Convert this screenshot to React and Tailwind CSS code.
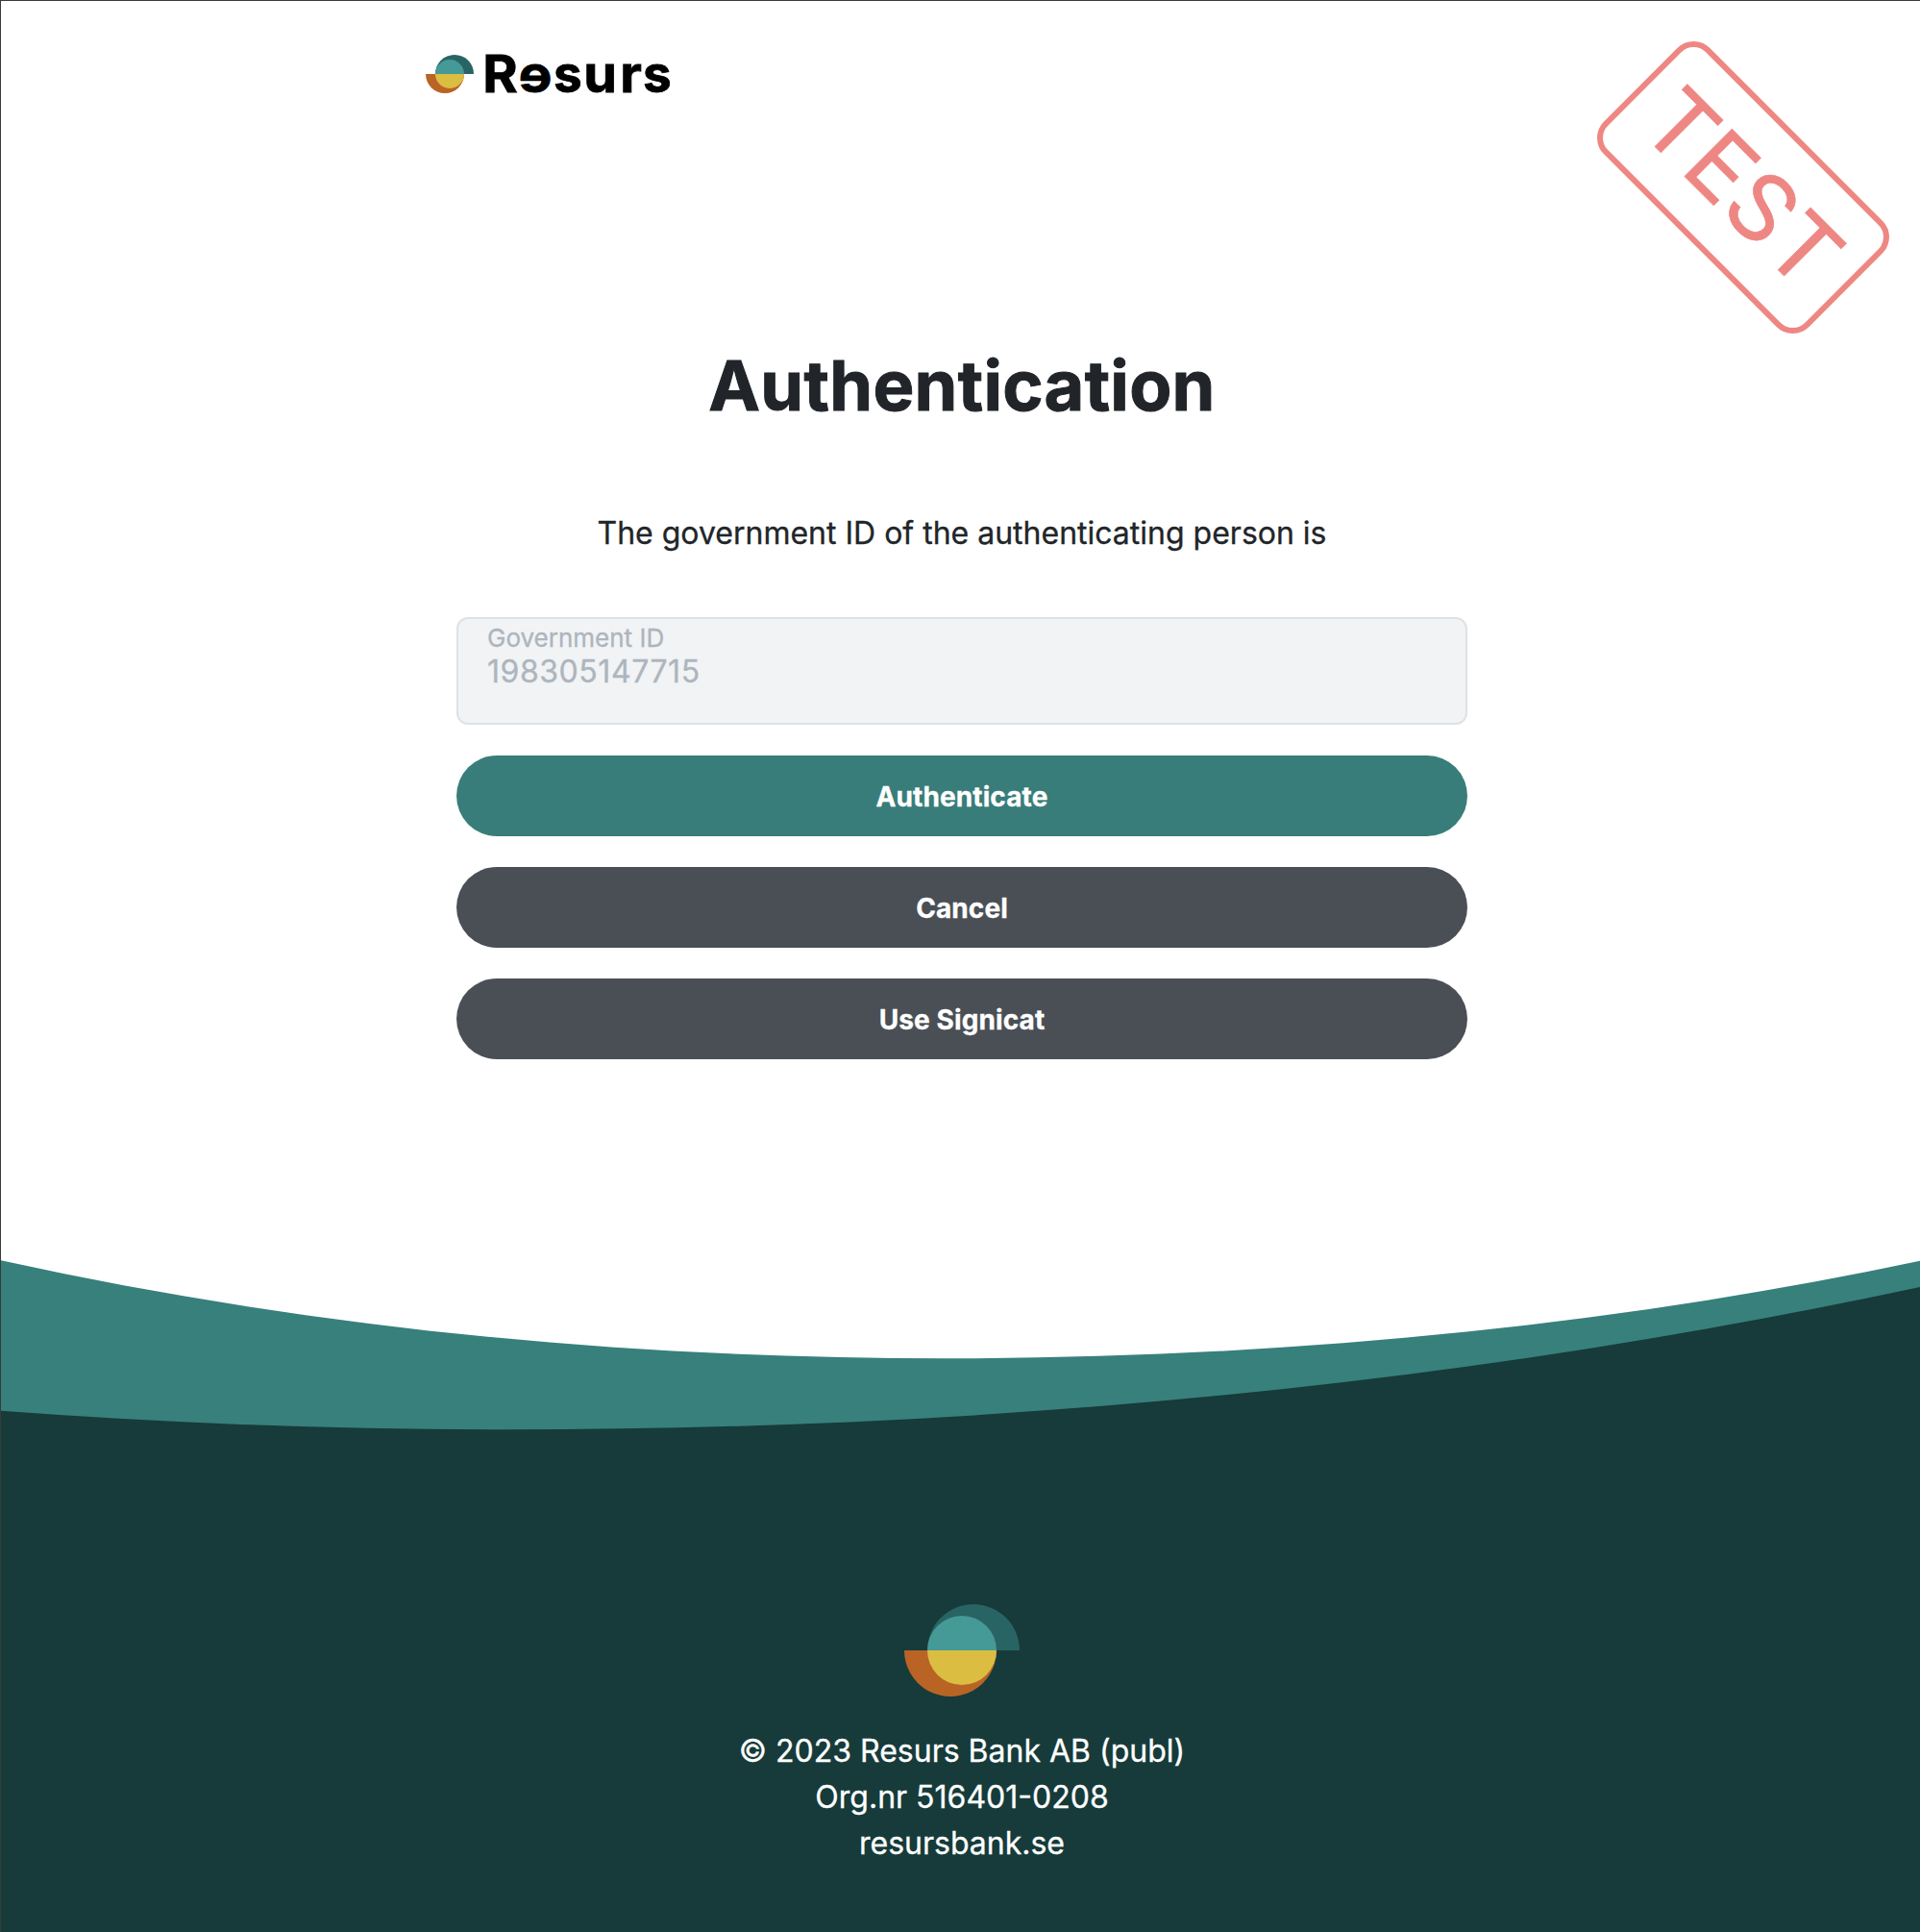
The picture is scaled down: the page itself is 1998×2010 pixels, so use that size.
function Mark({ className }) {
  return (
    <svg viewBox="0 0 120 96" className={className} aria-hidden="true">
      <path d="M24 48a48 48 0 0 1 96 0z" fill="#296464" />
      <path d="M0 48a48 48 0 0 0 96 0z" fill="#b96424" />
      <path d="M24 48a36 36 0 0 1 72 0z" fill="#459a97" />
      <path d="M24 48a36 36 0 0 0 72 0z" fill="#dbbd42" />
    </svg>
  );
}

function Wordmark() {
  return (
    <span className="ml-[10px] flex text-center text-[53px] leading-[40px] font-bold text-black [-webkit-text-stroke:0.8px]">
      <span className="w-[35px] scale-x-105">R</span>
      <span className="w-[38px] -scale-x-110">e</span>
      <span className="w-[29px]">s</span>
      <span className="w-[39px] scale-x-105">u</span>
      <span className="w-[25px] scale-x-105">r</span>
      <span className="w-[26px]">s</span>
    </span>
  );
}

const buttons = [
  { label: "Authenticate", color: "bg-[#387d79]" },
  { label: "Cancel", color: "bg-[#4a4f56]" },
  { label: "Use Signicat", color: "bg-[#4a4f56]" },
];

export default function App() {
  return (
    <div className="relative flex h-[2010px] w-[1998px] flex-col overflow-hidden border-t border-l border-[#3a3a3c] bg-white font-['Inter',sans-serif] text-[#212529] [-webkit-text-stroke:0.3px]">
      <header className="flex h-[110px] items-start pt-[56px] pl-[442px]">
        <Mark className="h-10 w-[50px]" />
        <Wordmark />
      </header>

      <div className="absolute top-[116px] left-[1662px] flex h-[156px] w-[302px] rotate-45 items-center justify-center rounded-[24px] border-[6px] border-[#ee8783] text-[96px] leading-none text-[#ee8783] [-webkit-text-stroke:0.6px]">
        TEST
      </div>

      <main className="mx-[474px] flex h-[1200px] w-[1052px] flex-col items-stretch">
        <h1 className="mt-[246px] mb-px text-center text-[72px] leading-[88px] font-bold tracking-[0.3px] [-webkit-text-stroke:1px]">
          Authentication
        </h1>
        <p className="mt-[85px] text-center text-[32px] leading-[48px]">
          The government ID of the authenticating person is
        </p>
        <div className="mt-[63px] flex h-[112px] flex-col rounded-xl border-2 border-[#dee2e6] bg-[#f1f3f5] px-[30px] text-[#adb5bd]">
          <span className="mt-[4px] text-[26px] leading-[32px]">Government ID</span>
          <span className="text-[32px] leading-[38px] tracking-[0.55px]">198305147715</span>
        </div>
        <div className="mt-8 flex flex-col gap-8">
          {buttons.map((b) => (
            <button
              key={b.label}
              className={`h-[84px] rounded-full pt-[2px] text-[28px] font-bold tracking-[0.1px] text-white ${b.color}`}
            >
              {b.label}
            </button>
          ))}
        </div>
      </main>

      <footer className="relative flex h-[699px] flex-col items-center pt-[358px] pl-[3px] text-[32px] leading-[48px] text-white">
        <svg viewBox="0 0 1997 699" className="absolute inset-0 h-[699px] w-[1997px]" aria-hidden="true">
          <path d="M0 0.2C328 72.2 656 102.3 984 102.3S1659 72.5 1997 0.8V699H0z" fill="#38807c" />
          <path d="M0 156.8Q262 176.3 524 176.3C1015 176.3 1506 133.3 1997 28V699H0z" fill="#163b3a" />
        </svg>
        <Mark className="relative h-24 w-[120px]" />
        <p className="relative mt-[33px]">© 2023 Resurs Bank AB (publ)</p>
        <p className="relative">Org.nr 516401-0208</p>
        <p className="relative">resursbank.se</p>
      </footer>
    </div>
  );
}
